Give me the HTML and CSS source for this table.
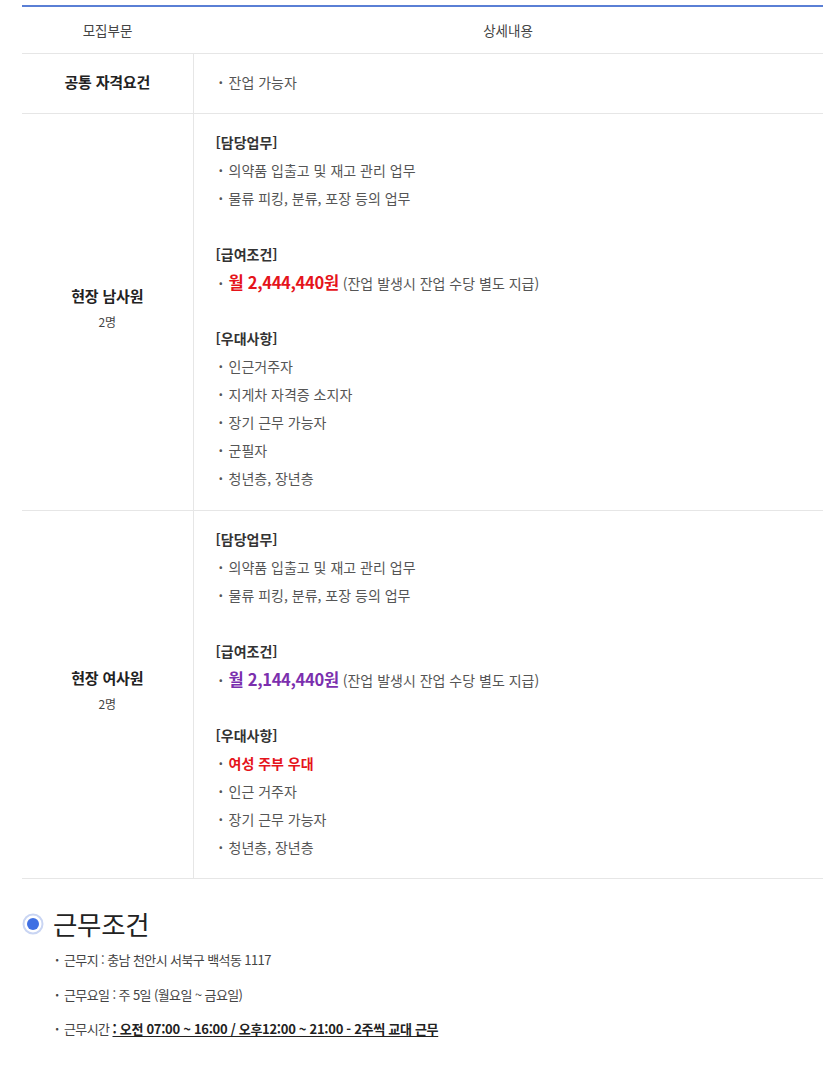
FILE: index.html
```html
<!DOCTYPE html>
<html lang="ko">
<head>
<meta charset="utf-8">
<link rel="stylesheet" href="styles.css">
</head>
<body>
<div class="page">
  <table class="recruit">
    <thead>
      <tr>
        <th class="col-left">모집부문</th>
        <th class="col-right">상세내용</th>
      </tr>
    </thead>
    <tbody>
      <tr>
        <td class="label"><strong>공통 자격요건</strong></td>
        <td class="detail">
          <p class="item">잔업 가능자</p>
        </td>
      </tr>
      <tr>
        <td class="label"><strong>현장 남사원</strong><span class="count">2명</span></td>
        <td class="detail tall">
          <p class="head">[담당업무]</p>
          <p class="item">의약품 입출고 및 재고 관리 업무</p>
          <p class="item">물류 피킹, 분류, 포장 등의 업무</p>
          <p class="blank"></p>
          <p class="head">[급여조건]</p>
          <p class="item"><span class="pay red">월 2,444,440원</span> (잔업 발생시 잔업 수당 별도 지급)</p>
          <p class="blank"></p>
          <p class="head">[우대사항]</p>
          <p class="item">인근거주자</p>
          <p class="item">지게차 자격증 소지자</p>
          <p class="item">장기 근무 가능자</p>
          <p class="item">군필자</p>
          <p class="item">청년층, 장년층</p>
        </td>
      </tr>
      <tr>
        <td class="label"><strong>현장 여사원</strong><span class="count">2명</span></td>
        <td class="detail">
          <p class="head">[담당업무]</p>
          <p class="item">의약품 입출고 및 재고 관리 업무</p>
          <p class="item">물류 피킹, 분류, 포장 등의 업무</p>
          <p class="blank"></p>
          <p class="head">[급여조건]</p>
          <p class="item"><span class="pay purple">월 2,144,440원</span> (잔업 발생시 잔업 수당 별도 지급)</p>
          <p class="blank"></p>
          <p class="head">[우대사항]</p>
          <p class="item"><span class="emph">여성 주부 우대</span></p>
          <p class="item">인근 거주자</p>
          <p class="item">장기 근무 가능자</p>
          <p class="item">청년층, 장년층</p>
        </td>
      </tr>
    </tbody>
  </table>

  <section class="cond">
    <h2 class="cond-title">
      <svg class="radio" width="22" height="22" viewBox="0 0 22 22" aria-hidden="true">
        <circle cx="11" cy="11" r="9.5" fill="#fff" stroke="#c9d5f3" stroke-width="2"/>
        <circle cx="11" cy="11" r="6" fill="#4070e3"/>
      </svg>
      <span>근무조건</span>
    </h2>
    <ul class="cond-list">
      <li>근무지 : 충남 천안시 서북구 백석동 1117</li>
      <li>근무요일 : 주 5일 (월요일 ~ 금요일)</li>
      <li>근무시간 <u class="hours">: 오전 07:00 ~ 16:00 / 오후12:00 ~ 21:00 - 2주씩 교대 근무</u></li>
    </ul>
  </section>
</div>
</body>
</html>
```
FILE: styles.css
```css
html, body {
  margin: 0;
  padding: 0;
  background: #fff;
}
body {
  font-family: "Noto Sans CJK KR", "Noto Sans", sans-serif;
  color: #555;
}
.page {
  padding: 5px 12px 0 22px;
}
.recruit {
  width: 801px;
  border-collapse: collapse;
  border-top: 2px solid #5a7fd5;
  table-layout: fixed;
}
.recruit th {
  height: 46px;
  padding: 0;
  font-size: 13.5px;
  font-weight: normal;
  color: #444;
  text-align: center;
  border-bottom: 1px solid #e6e6e6;
}
.col-left { width: 171px; }
.recruit td {
  border-bottom: 1px solid #e6e6e6;
  padding: 14px 0 17px;
}
.recruit td.tall {
  padding-bottom: 18px;
}
.label {
  text-align: center;
  vertical-align: middle;
  border-right: 1px solid #e6e6e6;
  color: #222;
}
.label strong {
  display: block;
  font-size: 15px;
  font-weight: bold;
  line-height: 22px;
  letter-spacing: -0.2px;
}
.label .count {
  display: block;
  font-size: 12px;
  color: #444;
  line-height: 30px;
}
.detail {
  padding-left: 22px !important;
  vertical-align: top;
}
.detail p {
  margin: 0;
  height: 28px;
  line-height: 28px;
  font-size: 14px;
  letter-spacing: 0;
  white-space: nowrap;
}
.detail .head {
  color: #333;
  font-weight: 600;
}
.detail .item::before {
  content: "·";
  display: inline-block;
  width: 10px;
  padding-left: 3px;
  font-weight: bold;
}
.pay {
  font-size: 16.5px;
  font-weight: bold;
  letter-spacing: -0.3px;
}
.red { color: #e5141b; }
.purple { color: #7b2fae; }
.emph {
  color: #e5141b;
  font-weight: bold;
}
.cond {
  padding-top: 25px;
}
.cond-title {
  margin: 0;
  display: flex;
  align-items: center;
  gap: 9px;
  font-size: 26.5px;
  font-weight: normal;
  color: #222;
  line-height: 40px;
  letter-spacing: -0.3px;
}
.radio { flex: none; }
.cond-list {
  list-style: none;
  margin: -1px 0 0;
  padding: 0 0 0 33px;
}
.cond-list li {
  font-size: 13px;
  line-height: 34.5px;
  color: #444;
  letter-spacing: -0.6px;
}
.cond-list li::before {
  content: "·";
  display: inline-block;
  width: 9px;
  font-weight: bold;
}
.hours {
  color: #222;
  font-weight: bold;
  letter-spacing: -0.3px;
  text-decoration: underline;
  text-underline-offset: 2px;
}
```
